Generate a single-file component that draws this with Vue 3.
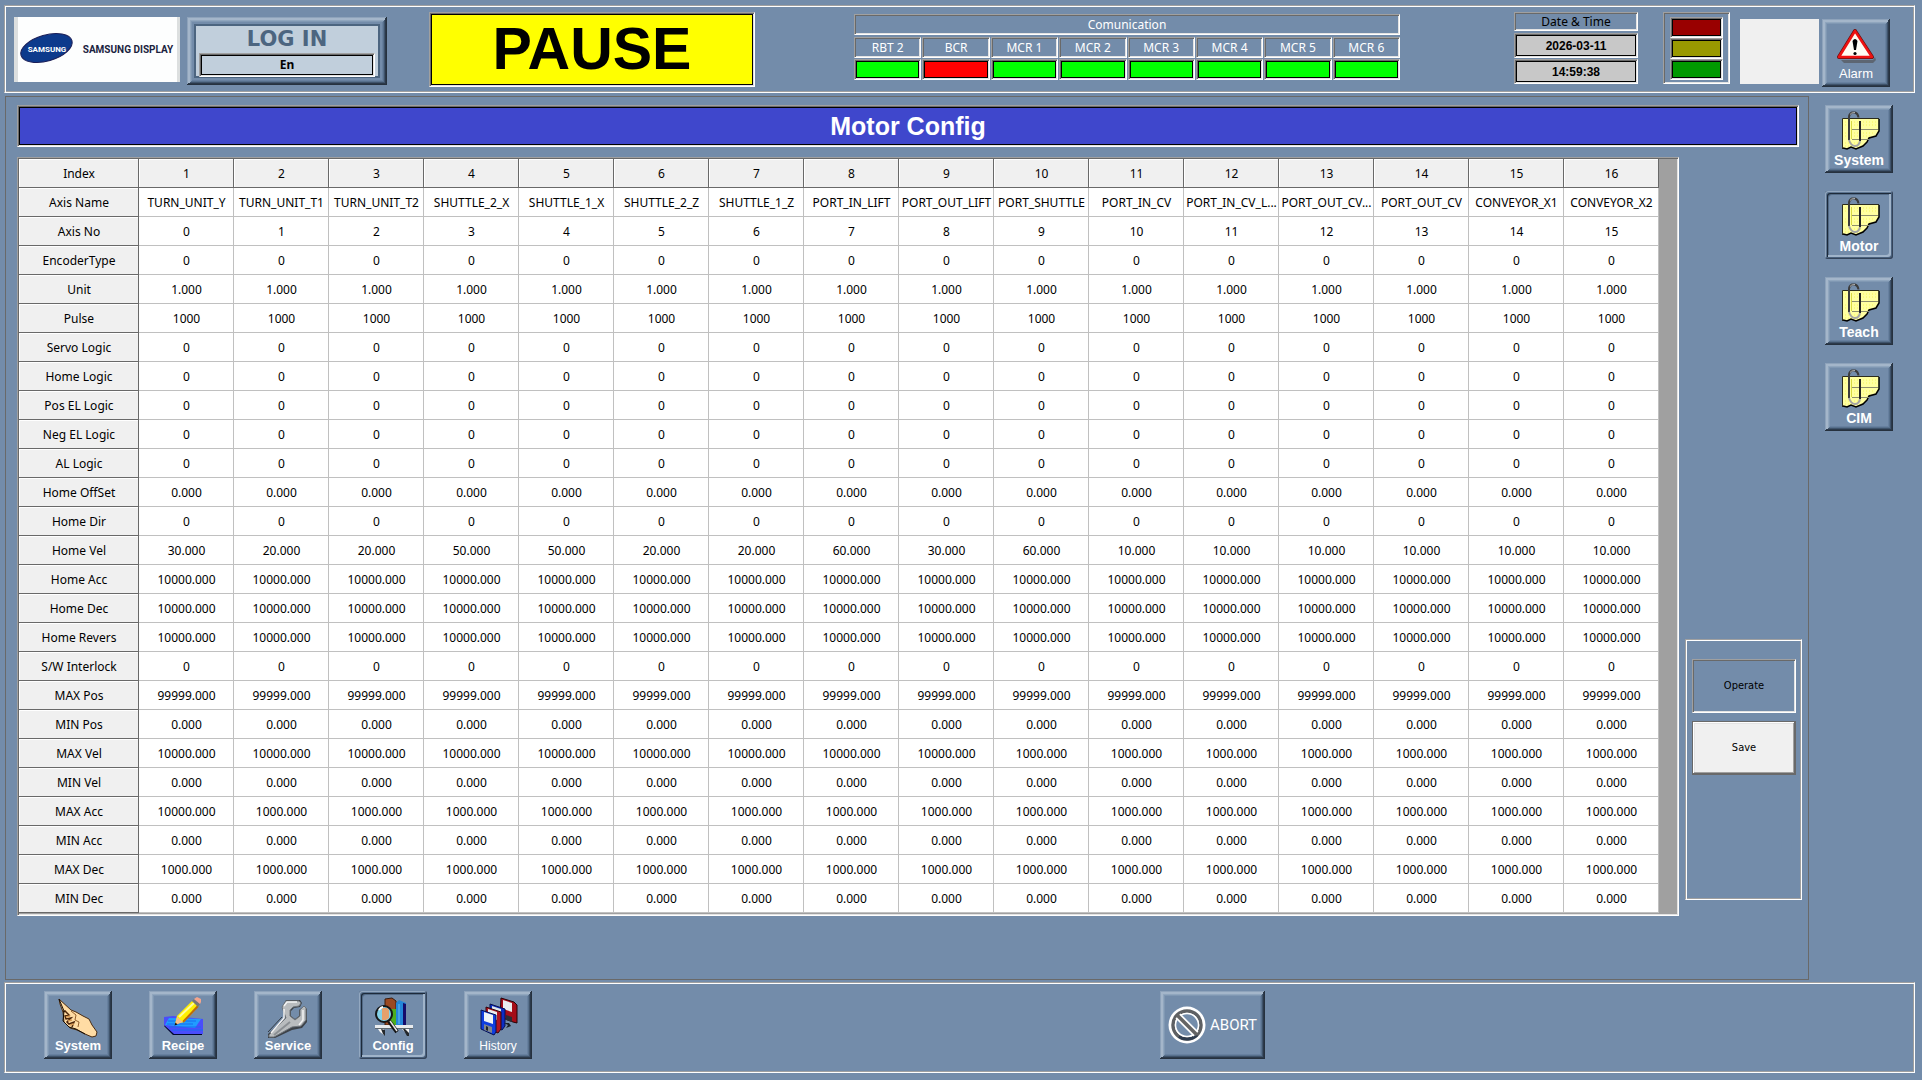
<template>
  <div class="screen">
    <header class="topbar etched">
      <div class="brand">
        <svg class="logo" viewBox="0 0 166 65" role="img" aria-label="Samsung Display">
          <rect width="166" height="65" fill="#fdfefe" />
          <rect width="4" height="65" fill="#dcdfdf" />
          <rect x="163" width="3" height="65" fill="#dcdfdf" />
          <ellipse cx="32.500" cy="31" rx="26.500" ry="13" transform="rotate(-16 32.500 31)" fill="#0d3a8c" stroke="#1b1e57" />
          <text x="33" y="35" class="logo-mark">SAMSUNG</text>
          <text x="114" y="36" class="logo-name">SAMSUNG DISPLAY</text>
        </svg>
        <button type="button" class="login bevel">
          <span class="login-face">
            <span class="login-title">LOG IN</span>
            <span class="login-user framed">En</span>
          </span>
        </button>
      </div>

      <div class="status framed">PAUSE</div>

      <section class="comm">
        <div class="comm-title sunken">Comunication</div>
        <div v-for="link in links" :key="link.name" class="comm-item">
          <div class="comm-name sunken">{{ link.name }}</div>
          <div class="comm-lamp framed" :class="{ down: !link.ok }"></div>
        </div>
      </section>

      <section class="clock">
        <div class="clock-title sunken">Date &amp; Time</div>
        <div class="clock-value framed">2026-03-11</div>
        <div class="clock-value framed">14:59:38</div>
      </section>

      <div class="tower sunken">
        <div v-for="lamp in lamps" :key="lamp" class="lamp framed" :class="lamp"></div>
      </div>

      <div class="alarm-area">
        <div class="blank"></div>
        <button type="button" class="tool bevel">
          <svg viewBox="0 0 68 48" aria-hidden="true">
            <path d="M19 41h32l2-3 1 3-3 3H22z" fill="#5d6672" />
            <path d="M33 12 50 38H17z" fill="#fffdf4" stroke="#6b0f0f" stroke-width="4" stroke-linejoin="round" />
            <path d="M33 12 50 38H17z" fill="#fffdf4" stroke="#ee1111" stroke-width="2.500" stroke-linejoin="round" />
            <path d="M30.500 22q2.500-4 5 0l-1.500 9h-2z" fill="#000" />
            <circle cx="33" cy="34.500" r="1.600" fill="#000" />
          </svg>
          <span class="label thin">Alarm</span>
        </button>
      </div>
    </header>

    <div class="middle">
      <main class="panel">
        <h1 class="title framed">Motor Config</h1>
        <div class="work">
          <div class="grid-box sunken">
            <table>
              <colgroup>
                <col class="col-name" />
                <col v-for="n in 16" :key="n" />
              </colgroup>
              <thead>
                <tr>
                  <th scope="col">Index</th>
                  <th v-for="n in 16" :key="n" scope="col">{{ n }}</th>
                </tr>
              </thead>
              <tbody>
                <tr v-for="row in rows" :key="row.name">
                  <th scope="row">{{ row.name }}</th>
                  <td v-for="(value, i) in row.values" :key="i">{{ value }}</td>
                </tr>
              </tbody>
            </table>
          </div>
          <aside class="actions etched">
            <button type="button" class="action operate sunken">Operate</button>
            <button type="button" class="action save">Save</button>
          </aside>
        </div>
      </main>

      <nav class="side">
        <button
          v-for="name in pages"
          :key="name"
          type="button"
          class="tool"
          :class="name === currentPage ? 'pressed' : 'bevel'"
          @click="currentPage = name">
          <svg viewBox="0 0 68 48" aria-hidden="true">
            <path d="M17 13.500 54 14v12l-3 5-7 2-2 4-4 4-7 3-5-2-4 2-4-1z" fill="#ffffa0" />
            <path d="M20 17h31M20 20h31M20 28h29M20 31h27M20 38h16M20 41h14" stroke="#f6f65c" stroke-dasharray="1 2" />
            <path d="M17.500 44V13.500H54" fill="none" stroke="#2c2c1c" />
            <path d="M54 14v12l-3 5-7 2-2 4-4 4-7 3-5-2-4 2-4-1" fill="none" stroke="#000" stroke-width="1.500" />
            <path d="M26 24.500h27M27 34.500h17" stroke="#8c8c6c" />
            <path d="M24 35V12q0-3 3-4.500h3q3 1 3.500 5" fill="none" stroke="#3c3c3c" stroke-width="2" />
            <path d="M25 9.500q1-2 5-2" fill="none" stroke="#b5b5b5" />
            <path d="M35 16v20" stroke="#222" stroke-width="2" />
            <path d="M24 35q2 6 6 6t5-5" fill="none" stroke="#a4a4a4" stroke-width="2" />
            <path d="M26.500 16v18" stroke="#d9d943" />
          </svg>
          <span class="label">{{ name }}</span>
        </button>
      </nav>
    </div>

    <footer class="bottombar etched">
      <nav class="menu">
        <button type="button" class="tool bevel">
          <svg viewBox="0 0 68 48" aria-hidden="true">
            <path d="m15 8 12 11 5 2 7 4 6 3 3 6 5 7-1 4-4 1-7-3-8-4-7-2-6-6-1-10-3-8z" fill="#ffdca4" stroke="#4a2c12" />
            <path d="m19 21 2-1 4 4-4 1 1 3 5-1-4 4 2 2 5-2-2 5" fill="none" stroke="#4a2308" stroke-width="1.500" />
            <path d="m27 20 5 4-1 5 4 2-1 5" fill="none" stroke="#94602c" />
            <path d="m22 26 4-1M24 30l4-1M26 34l4-1" stroke="#d79a55" stroke-width="1.500" />
            <path d="m15 8 5 12-1 10 6 6 7 2 9 5" fill="none" stroke="#160c04" />
          </svg>
          <span class="label">System</span>
        </button>
        <button type="button" class="tool bevel">
          <svg viewBox="0 0 68 48" aria-hidden="true">
            <path d="M15 35 24 44h29v-2H26l-9-9z" fill="#00062e" />
            <path d="M15 26 24 25l30 3v15H25L15 34z" fill="#4a4dfb" />
            <path d="m20 27 32 1-6 9-30-3z" fill="#209dff" />
            <path d="M19 30h28M18 33h26M20 36h32M23 39h31" stroke="#176cf0" />
            <path d="m26 33 2-8 15-15 7 5-15 16z" fill="#ffef00" />
            <path d="m30 26 15-14" stroke="#fffba0" stroke-width="2" />
            <path d="m34 31 15-16" stroke="#bd6b0c" stroke-width="2" />
            <path d="m26 34 2-8 6 5z" fill="#f6bc86" />
            <path d="m25.500 34.500 1-3 2 2z" fill="#111" />
            <path d="m43 10 2-2 6 5-2 3z" fill="#777" />
            <path d="m45 8 3-2 4 2v3l-1 2z" fill="#f5a58c" />
          </svg>
          <span class="label">Recipe</span>
        </button>
        <button type="button" class="tool bevel">
          <svg viewBox="0 0 68 48" aria-hidden="true">
            <path d="m28 16 4-7h14l2 3-2 4-6 1-3 3v5l4 3 4-3v-6l5-4 3 3v13l-5 6-10 2-17 8h-7v-4l17-16z" fill="#3d4248" />
            <path d="m28 16 4-6h13l2 2-2 3-6 1-3 3v6l5 4 5-4v-6l4-4 2 2v12l-5 6-9 1-18 10h-5v-2l17-17z" fill="#b9bcbe" stroke="#6f757b" />
            <path d="m30 15 3-4h10M30 18v9L17 42M49 19v10l-4 5" fill="none" stroke="#f4f4f4" stroke-width="1.500" />
            <path d="m36 31-16 13" stroke="#8b8f93" stroke-width="2" />
            <path d="m14 41 14-15" stroke="#333a42" />
          </svg>
          <span class="label">Service</span>
        </button>
        <button type="button" class="tool pressed">
          <svg viewBox="0 0 68 48" aria-hidden="true">
            <path d="m26 8 7-1 4 3v24H26z" fill="#9b4a22" stroke="#3a1b0b" />
            <path d="M32 18h6v16h-6z" fill="#4cae1d" />
            <path d="m37 12 3-3 7 3v22H37z" fill="#2386d8" />
            <path d="m44 12 3 1v21h-3z" fill="#150b6b" />
            <path d="M40 13v20" stroke="#68bdf5" />
            <path d="M16 34h38v3H16z" fill="#e8ebee" />
            <path d="M16 37.500h38" stroke="#5e6871" />
            <path d="M19 38h6v6l-4-3zM43 38h7v5h-2z" fill="#f4f4f4" />
            <path d="m22 38 4 1v6l-2-2zM44 38h2l4 4v3h-2z" fill="#24282c" />
            <circle cx="25" cy="23" r="8" fill="#84d2e8" stroke="#161616" stroke-width="2" />
            <path d="M23 17h5l2 2v8l-3 2h-4z" fill="#e5a06b" />
            <path d="M20 19q2-3 4-3" fill="none" stroke="#fff" stroke-width="2" />
            <path d="m30 30 8 11" stroke="#111" stroke-width="4" />
            <path d="m31 30 7 10" stroke="#e5e5e5" stroke-width="1.500" />
          </svg>
          <span class="label">Config</span>
        </button>
        <button type="button" class="tool bevel">
          <svg viewBox="0 0 68 48" aria-hidden="true">
            <path d="m37 7 13 4 3 3v18l-4-1-13-5z" fill="#a50d18" stroke="#270307" />
            <path d="m39 9 9 3v9l-9-3z" fill="#e9eef0" />
            <path d="m42 24 6 2v5l-6-2z" fill="#2a2d35" />
            <path d="m26 13 15 5v17l-3 4-12-5z" fill="#0c2dc4" stroke="#06104e" />
            <path d="m28 15 9 3v7l-9-3z" fill="#dfe7ed" />
            <path d="m22 16 15 5v17l-3 4-12-5z" fill="#b01420" stroke="#34050a" />
            <path d="m24 18 9 3v8l-9-3z" fill="#e9eef0" />
            <path d="m17 19 15 5v17l-2 3-13-6z" fill="#0f3ee0" stroke="#06104e" />
            <path d="m20 21 9 3v9l-9-3z" fill="#f0f4f6" />
            <path d="m20 33 8 3v6l-8-3z" fill="#7f858b" />
            <path d="M22 35v4l2 1v-4z" fill="#20242a" />
            <path d="m40 32 4 2-2 3 5-2-2-3" fill="#1b222b" />
          </svg>
          <span class="label small">History</span>
        </button>
      </nav>
      <button type="button" class="abort bevel">
        <svg viewBox="0 0 38 38" aria-hidden="true">
          <circle cx="19" cy="19" r="18.500" fill="#fff" />
          <circle cx="19" cy="19" r="11.500" fill="#738caa" />
          <circle cx="19" cy="19" r="14" fill="none" stroke="#5e6063" stroke-width="3.500" />
          <path d="M29 29a14 14 0 0 1-18 1.500" fill="none" stroke="#2d3b4e" stroke-width="3" />
          <circle cx="19" cy="19" r="11.500" fill="none" stroke="#fff" stroke-width="1.500" />
          <path d="m10 10 18 18" stroke="#fff" stroke-width="7" />
          <path d="m9 9 20 20" stroke="#646464" stroke-width="3.500" />
        </svg>
        <span>ABORT</span>
      </button>
    </footer>
  </div>
</template>

<script setup>
import { ref } from 'vue'

const links = [
  { name: 'RBT 2', ok: true },
  { name: 'BCR', ok: false },
  { name: 'MCR 1', ok: true },
  { name: 'MCR 2', ok: true },
  { name: 'MCR 3', ok: true },
  { name: 'MCR 4', ok: true },
  { name: 'MCR 5', ok: true },
  { name: 'MCR 6', ok: true }
]

const lamps = ['red', 'yellow', 'green']

const pages = ['System', 'Motor', 'Teach', 'CIM']
const currentPage = ref('Motor')

const axisNames = [
  'TURN_UNIT_Y', 'TURN_UNIT_T1', 'TURN_UNIT_T2', 'SHUTTLE_2_X',
  'SHUTTLE_1_X', 'SHUTTLE_2_Z', 'SHUTTLE_1_Z', 'PORT_IN_LIFT',
  'PORT_OUT_LIFT', 'PORT_SHUTTLE', 'PORT_IN_CV', 'PORT_IN_CV_L...',
  'PORT_OUT_CV...', 'PORT_OUT_CV', 'CONVEYOR_X1', 'CONVEYOR_X2'
]

const homeVel = [30, 20, 20, 50, 50, 20, 20, 60, 30, 60, 10, 10, 10, 10, 10, 10]

// same value for every axis
const all = (value) => Array(16).fill(value)
// first `count` axes get one value, the rest another
const split = (count, first, rest) => axisNames.map((_, i) => (i < count ? first : rest))

const rows = [
  { name: 'Axis Name', values: axisNames },
  { name: 'Axis No', values: axisNames.map((_, i) => i) },
  { name: 'EncoderType', values: all('0') },
  { name: 'Unit', values: all('1.000') },
  { name: 'Pulse', values: all('1000') },
  { name: 'Servo Logic', values: all('0') },
  { name: 'Home Logic', values: all('0') },
  { name: 'Pos EL Logic', values: all('0') },
  { name: 'Neg EL Logic', values: all('0') },
  { name: 'AL Logic', values: all('0') },
  { name: 'Home OffSet', values: all('0.000') },
  { name: 'Home Dir', values: all('0') },
  { name: 'Home Vel', values: homeVel.map((v) => v.toFixed(3)) },
  { name: 'Home Acc', values: all('10000.000') },
  { name: 'Home Dec', values: all('10000.000') },
  { name: 'Home Revers', values: all('10000.000') },
  { name: 'S/W Interlock', values: all('0') },
  { name: 'MAX Pos', values: all('99999.000') },
  { name: 'MIN Pos', values: all('0.000') },
  { name: 'MAX Vel', values: split(9, '10000.000', '1000.000') },
  { name: 'MIN Vel', values: all('0.000') },
  { name: 'MAX Acc', values: split(1, '10000.000', '1000.000') },
  { name: 'MIN Acc', values: all('0.000') },
  { name: 'MAX Dec', values: all('1000.000') },
  { name: 'MIN Dec', values: all('0.000') }
]
</script>

<style>
body {
  margin: 0;
  background: #738caa;
}
</style>

<style scoped>
.screen,
.screen * {
  box-sizing: border-box;
}

.screen {
  display: flex;
  flex-direction: column;
  min-height: 100vh;
  padding: 5px 7px 7px 4px;
  background: #738caa;
  font-family: "Noto Sans", "Liberation Sans", sans-serif;
  font-size: 12px;
  color: #000;
}

button {
  margin: 0;
  padding: 0;
  border: 0;
  background: #738caa;
  font-family: inherit;
  cursor: pointer;
}

/* classic window edges */
.etched {
  border: 1px solid;
  border-color: #a0a0a0 #fff #fff #a0a0a0;
  box-shadow: inset 1px 1px #fff, inset -1px -1px #a0a0a0;
}

.sunken {
  border: 1px solid;
  border-color: #a0a0a0 #fff #fff #a0a0a0;
  box-shadow: inset 1px 1px #696969, inset -1px -1px #e3e3e3;
}

.framed {
  border: 1px solid;
  border-color: #a0a0a0 #fff #fff #a0a0a0;
  box-shadow: inset 1px 1px #696969, inset -1px -1px #e3e3e3, inset 0 0 0 2px #000;
}

.bevel {
  box-shadow:
    inset -1px -1px #26313e,
    inset 1px 1px #8ea3bb,
    inset -2px -2px #2b394a,
    inset 3px 3px #a4b6ca,
    inset -3px -3px #3f536b,
    inset 4px 4px #90a6be,
    inset -4px -4px #57708c,
    inset 5px 5px #8098b3,
    inset -5px -5px #67809f;
}

.pressed {
  border-radius: 3px;
  box-shadow:
    inset -1px -1px #34445a,
    inset 1px 1px #93a8c0,
    inset -2px -2px #4a617d,
    inset 2px 2px #5b738f,
    inset 3px 3px #1d2a3a,
    inset -4px -4px #a0b4ca,
    inset 4px 4px #526a86;
}

/* top bar */
.topbar {
  display: flex;
  align-items: flex-start;
  height: 88px;
  padding: 6px 24px 0 9px;
}

.brand {
  display: flex;
  gap: 7px;
  padding-top: 5px;
}

.logo {
  width: 166px;
  height: 65px;
}

.logo-mark {
  font: bold 8px Roboto, sans-serif;
  fill: #fff;
  text-anchor: middle;
}

.logo-name {
  font: bold 10px Roboto, sans-serif;
  fill: #1b2340;
  text-anchor: middle;
}

.login {
  width: 200px;
  height: 68px;
  padding: 7px;
}

.login-face {
  display: flex;
  flex-direction: column;
  height: 54px;
  padding: 0 3px;
  border: 2px solid #4c6580;
  background: #c1cfdc;
}

.login-title {
  font: bold 21px/27px "DejaVu Sans", sans-serif;
  color: #4c6580;
}

.login-user {
  font-weight: bold;
  font-size: 12px;
  line-height: 22px;
}

.status {
  width: 326px;
  height: 75px;
  margin-left: 42px;
  background: #ff0;
  font: bold 59px/73px "Liberation Sans", sans-serif;
  text-align: center;
}

.comm {
  display: grid;
  grid-template-columns: repeat(8, 1fr);
  gap: 2px 1px;
  width: 546px;
  margin: 2px 0 0 99px;
  color: #fff;
  line-height: 19px;
  text-align: center;
}

.comm-title {
  grid-column: 1 / -1;
  height: 21px;
}

.comm-name,
.comm-lamp {
  height: 21px;
}

.comm-name {
  margin-bottom: 1px;
}

.comm-lamp {
  background: #0f0;
}

.comm-lamp.down {
  background: #f00;
}

.clock {
  width: 124px;
  margin-left: auto;
  text-align: center;
}

.clock-title {
  height: 19px;
  margin-bottom: 2px;
  line-height: 17px;
}

.clock-value {
  height: 25px;
  margin-bottom: 1px;
  padding-top: 1px;
  background: #c8c8c8;
  font: bold 12px/23px "Liberation Sans", sans-serif;
}

.tower {
  width: 67px;
  height: 72px;
  margin-left: 25px;
  padding: 4px 6px;
}

.lamp {
  height: 21px;
}

.lamp.red {
  background: #900;
}

.lamp.yellow {
  background: #990;
}

.lamp.green {
  background: #090;
}

.alarm-area {
  display: flex;
  gap: 3px;
  margin-left: 10px;
  padding-top: 7px;
}

.blank {
  width: 79px;
  height: 65px;
  background: #f0f0f0;
}

/* icon buttons */
.tool {
  display: flex;
  flex-direction: column;
  flex: none;
  width: 68px;
  height: 68px;
}

.tool svg {
  width: 68px;
  height: 48px;
}

.label {
  width: 68px;
  font: bold 13px/14px "Liberation Sans", sans-serif;
  color: #fff;
  text-align: center;
}

.label.thin {
  font-weight: normal;
}

.label.small {
  font-weight: normal;
  font-size: 12px;
}

.side .label {
  font-size: 14px;
}

/* centre */
.middle {
  display: flex;
  flex: 1;
  margin: 3px 0 2px 1px;
}

.panel {
  flex: 1;
  min-width: 0;
  padding: 8px 6px 0 11px;
  border: 1px solid #696969;
}

.title {
  height: 42px;
  margin: 0 3px 10px 0;
  background: #3f47cc;
  color: #fff;
  font: bold 25px/40px "Liberation Sans", sans-serif;
  text-align: center;
}

.work {
  display: flex;
  gap: 6px;
}

.grid-box {
  flex: 1;
  min-width: 0;
  padding: 1px 19px 2px 1px;
  background: #a0a0a0;
}

table {
  width: 100%;
  table-layout: fixed;
  border-collapse: separate;
  border-spacing: 0;
}

.col-name {
  width: 120px;
}

th,
td {
  height: 29px;
  padding: 2px 0 0 1px;
  border: 0 solid #c0c0c0;
  border-width: 0 1px 1px 0;
  background: #fff;
  font-weight: normal;
  line-height: 16px;
  text-align: center;
  white-space: nowrap;
  overflow: hidden;
}

th {
  border-color: #696969;
  background: #f0f0f0;
  box-shadow: inset 1px 1px #fff;
}

.actions {
  display: flex;
  flex-direction: column;
  gap: 8px;
  width: 117px;
  height: 261px;
  margin-top: 482px;
  padding: 19px 5px 0 6px;
}

.action {
  height: 54px;
  font: 11px/16px "DejaVu Sans Condensed", "DejaVu Sans", sans-serif;
  color: #000;
}

.save {
  border: 1px solid #696969;
  background: #f0f0f0;
  box-shadow:
    inset -1px -1px #696969,
    inset 1px 1px #fff,
    inset -2px -2px #a0a0a0,
    inset 2px 2px #e3e3e3;
}

.side {
  display: flex;
  flex-direction: column;
  gap: 18px;
  padding: 9px 22px 0 16px;
}

/* bottom bar */
.bottombar {
  display: flex;
  align-items: flex-start;
  height: 91px;
  padding: 8px 39px;
}

.menu {
  display: flex;
  gap: 37px;
}

.abort {
  display: flex;
  align-items: center;
  gap: 4px;
  width: 105px;
  height: 68px;
  margin-left: 628px;
  padding-left: 8px;
  color: #fff;
  font: 15px/16px Roboto, sans-serif;
}

.abort svg {
  width: 38px;
  height: 38px;
}
</style>
